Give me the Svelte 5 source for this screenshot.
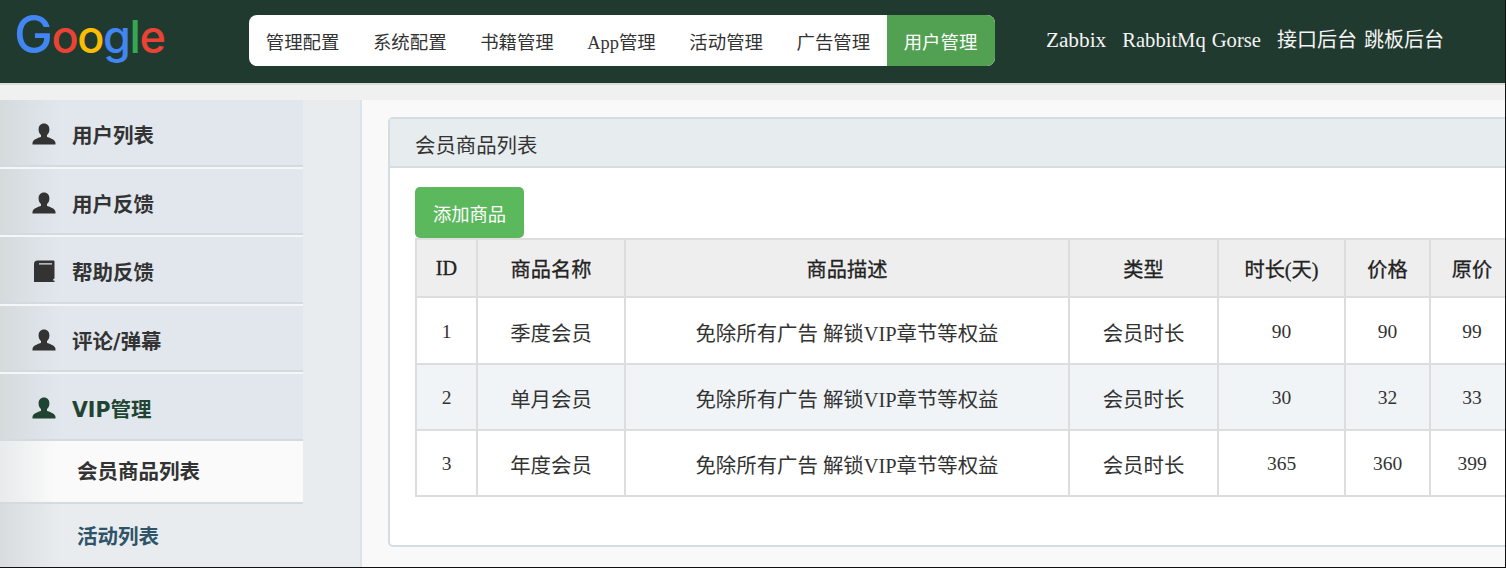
<script>
	const nav = ['管理配置', '系统配置', '书籍管理', 'App管理', '活动管理', '广告管理'];
	const logo = [
		['G', '#4285f4'],
		['o', '#ea4335'],
		['o', '#fbbc05'],
		['g', '#4285f4'],
		['l', '#34a853'],
		['e', '#ea4335']
	];
	const menu = [
		{ name: '用户列表', icon: 'user' },
		{ name: '用户反馈', icon: 'user' },
		{ name: '帮助反馈', icon: 'book' },
		{ name: '评论/弹幕', icon: 'user' },
		{ name: 'VIP管理', icon: 'user', active: true }
	];
	const goods = [
		{ id: 1, name: '季度会员', days: 90, price: 90, old: 99 },
		{ id: 2, name: '单月会员', days: 30, price: 32, old: 33 },
		{ id: 3, name: '年度会员', days: 365, price: 360, old: 399 }
	];
</script>

<div class="page">
	<header class="top">
		<div class="logo">
			{#each logo as [c, color]}
				<span style="color: {color}">{c}</span>
			{/each}
		</div>
		<nav class="nav">
			{#each nav as item}
				<a href="#/">{item}</a>
			{/each}
			<a href="#/" class="on">用户管理</a>
		</nav>
		<div class="links">
			<a href="#/" class="en l1">Zabbix</a>
			<a href="#/" class="en l2">RabbitMq</a>
			<a href="#/" class="en l3">Gorse</a>
			<a href="#/" class="l4">接口后台</a>
			<a href="#/" class="l5">跳板后台</a>
		</div>
	</header>
	<div class="band"></div>

	<div class="body">
		<aside class="side">
			{#each menu as m}
				<div class="item" class:active={m.active}>
					<svg class="ico" viewBox="0 0 24 24" width="24" height="24">
						{#if m.icon === 'user'}
							<path d="M12 1.5c-3.4 0-5.4 2.6-5.4 5.9 0 2.3.9 4.4 2.4 5.700v1.600c-1.800 1.100-7.300 2.300-8.300 5.300-.3 1-.2 2.500-.2 2.500h23c0 0 .1-1.500-.2-2.500-1-3-6.500-4.200-8.300-5.300v-1.600c1.500-1.300 2.400-3.400 2.400-5.700 0-3.300-2-5.900-5.400-5.900z" />
						{:else}
							<path d="M5.500 1.500H21.500q1 0 1 1V19q0 1-1 1l-.8 1.500H22.500V23H2V5q0-3.500 3.500-3.500zM7 4.300v1.200H20V4.300z" fill-rule="evenodd" />
						{/if}
					</svg>
					<span>{m.name}</span>
				</div>
			{/each}
			<div class="sub current">会员商品列表</div>
			<div class="sub link">活动列表</div>
		</aside>

		<main class="main">
			<section class="panel">
				<div class="panel-head">会员商品列表</div>
				<div class="panel-body">
					<button class="add">添加商品</button>
					<table>
						<colgroup>
							<col style="width: 61px" />
							<col style="width: 148px" />
							<col style="width: 444px" />
							<col style="width: 149px" />
							<col style="width: 127px" />
							<col style="width: 85px" />
							<col style="width: 84px" />
						</colgroup>
						<thead>
							<tr>
								<th>ID</th>
								<th>商品名称</th>
								<th>商品描述</th>
								<th>类型</th>
								<th>时长(天)</th>
								<th>价格</th>
								<th>原价</th>
							</tr>
						</thead>
						<tbody>
							{#each goods as g}
								<tr>
									<td class="num">{g.id}</td>
									<td>{g.name}</td>
									<td>免除所有广告 解锁VIP章节等权益</td>
									<td>会员时长</td>
									<td class="num">{g.days}</td>
									<td class="num">{g.price}</td>
									<td class="num">{g.old}</td>
								</tr>
							{/each}
						</tbody>
					</table>
				</div>
			</section>
		</main>
	</div>
</div>

<style>
	:global(body) {
		margin: 0;
		overflow: hidden;
	}

	.page {
		width: 1506px;
		height: 568px;
		box-sizing: border-box;
		overflow: hidden;
		border-bottom: 1px solid #111;
		border-right: 1px solid #111;
		font-family: 'Liberation Serif', 'Noto Sans CJK SC', serif;
		background: #f9f9f9;
	}

	.top {
		height: 83px;
		background: #213a30;
		display: flex;
		align-items: flex-start;
	}

	.logo {
		width: 249px;
		padding: 0 0 0 14px;
		box-sizing: border-box;
		font-family: Inter, sans-serif;
		font-size: 45px;
		font-weight: 500;
		line-height: 70px;
		letter-spacing: -1.4px;
	}

	.logo span:first-child {
		font-size: 52px;
	}

	.nav {
		margin-top: 15px;
		height: 51px;
		display: flex;
		background: #fff;
		border-radius: 8px;
		overflow: hidden;
	}

	.nav a {
		padding: 0 16.8px;
		font-size: 18.4px;
		line-height: 56px;
		color: #333;
		text-decoration: none;
	}

	.nav a.on {
		padding-right: 17.6px;
		background: #52a052;
		color: #fff;
	}

	.links {
		margin: 25px 0 0 51px;
		display: flex;
	}

	.links a {
		color: #f4f4f4;
		font-size: 20px;
		line-height: 30px;
		text-decoration: none;
		white-space: nowrap;
	}

	.links a.en {
		font-size: 20.6px;
	}

	.links a.l1 {
		font-size: 21.3px;
	}

	.links a.l2 { margin-left: 16px; }
	.links a.l3 { margin-left: 6px; }
	.links a.l4 { margin-left: 16px; }
	.links a.l5 { margin-left: 7px; }

	.band {
		height: 15px;
		border-top: 2px solid #dcdcdc;
		background: #f0f0f0;
	}

	.body {
		display: flex;
		height: 467px;
	}

	.side {
		width: 362px;
		flex: none;
		box-sizing: border-box;
		background: #e8ecef;
		border-right: 2px solid #dde3e7;
	}

	.item {
		width: 303px;
		height: 66.5px;
		margin-bottom: 2px;
		box-sizing: border-box;
		padding: 4px 0 0 32px;
		border-bottom: 2px solid #d3dbe0;
		background: linear-gradient(to right, #d5dadd, #e2e7ee 60px);
		display: flex;
		align-items: center;
		gap: 16px;
		color: #333;
		font-family: 'DejaVu Sans', 'Noto Sans CJK SC', sans-serif;
		font-size: 20.5px;
		font-weight: 700;
		box-shadow: 0 2px 0 #f4f6f7;
	}

	.item .ico {
		fill: #333;
	}

	.item.active {
		color: #214432;
		margin-bottom: 0;
		box-shadow: none;
	}

	.item.active .ico {
		fill: #214432;
	}

	.sub {
		width: 303px;
		box-sizing: border-box;
		padding-left: 77px;
		font-family: 'DejaVu Sans', 'Noto Sans CJK SC', sans-serif;
		font-size: 20.5px;
		font-weight: 700;
	}

	.current {
		height: 63px;
		line-height: 63px;
		color: #333;
		border-bottom: 2px solid #d3dbe0;
		background: linear-gradient(to right, #e8eaeb, #fafafa 55px);
	}

	.link {
		height: 66px;
		line-height: 67px;
		color: #2f5468;
		background: linear-gradient(to right, #d8dcdf, #e8ecef 60px);
	}

	.main {
		flex: 1;
		min-width: 0;
		padding: 17px 0 0 26px;
	}

	.panel {
		width: 1200px;
		height: 430px;
		box-sizing: border-box;
		border: 2px solid #d3dde2;
		border-radius: 5px;
		background: #fff;
	}

	.panel-head {
		height: 49px;
		box-sizing: border-box;
		border-bottom: 2px solid #d3dde2;
		background: #e7ecef;
		padding-left: 25px;
		font-size: 20.4px;
		line-height: 55px;
		color: #333;
	}

	.panel-body {
		padding: 19px 0 0 25px;
	}

	.add {
		display: block;
		width: 109px;
		height: 51px;
		border: none;
		border-radius: 5px;
		padding: 0;
		background: #5cb85c;
		color: #fff;
		font-family: inherit;
		font-size: 18.3px;
	}

	table {
		table-layout: fixed;
		width: 1098px;
		border-collapse: collapse;
		color: #333;
		text-align: center;
	}

	th, td {
		border: 2px solid #ddd;
		padding: 0;
	}

	th {
		height: 55px;
		padding-top: 1px;
		background: #eee;
		font-size: 20.2px;
		font-weight: 400;
		color: #222;
		-webkit-text-stroke: 0.3px #222;
	}

	td {
		height: 62px;
		padding-top: 2px;
		font-size: 20.4px;
	}

	td.num {
		font-size: 19.5px;
	}

	tbody tr:first-child td {
		height: 63px;
	}

	tbody tr:nth-child(2) td {
		background: #f0f4f7;
	}
</style>
